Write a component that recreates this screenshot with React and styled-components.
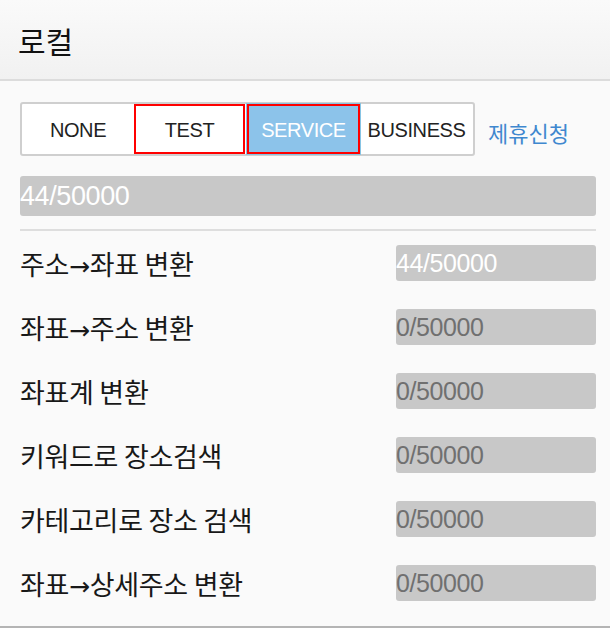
import React from 'react'
import styled, { createGlobalStyle } from 'styled-components'

const Global = createGlobalStyle`
  body {
    margin: 0;
    background: #fafafa;
    font-family: "Liberation Sans", "Noto Sans CJK KR", sans-serif;
  }
`

const Panel = styled.div`
  width: 610px;
  height: 626px;
  background: #fafafa;
  border-bottom: 2px solid #b4b4b4;
  display: flex;
  flex-direction: column;
`

const Header = styled.div`
  height: 79px;
  display: flex;
  align-items: center;
  padding: 0 18px;
  background: linear-gradient(#fafafa, #f1f1f1);
  border-bottom: 2px solid #dcdcdc;
  font-size: 30px;
  color: #111;
`

const Body = styled.div`
  padding: 21px 14px 0 20px;
  display: flex;
  flex-direction: column;
`

const Top = styled.div`
  display: flex;
  align-items: center;
  gap: 13px;
`

const Segments = styled.div`
  display: flex;
  height: 54px;
  box-sizing: border-box;
  border: 2px solid #cfcfcf;
  border-radius: 3px;
  background: #fff;
`

const Segment = styled.div`
  width: ${p => p.$w}px;
  box-sizing: border-box;
  display: flex;
  align-items: center;
  justify-content: center;
  padding-top: 2px;
  font-size: 20px;
  letter-spacing: -0.4px;
  white-space: nowrap;
  color: ${p => (p.$active ? '#fff' : '#222')};
  background: ${p => (p.$active ? '#8cc3ea' : 'transparent')};
  border: 2px solid ${p => (p.$marked ? '#f00' : 'transparent')};
  box-shadow: ${p => (p.$active ? '0 0 0 1px #86c4e4' : 'none')};
  margin: ${p => (p.$active ? '0 0 0 2px' : '0')};
`

const Apply = styled.a`
  font-family: "Noto Sans CJK KR", sans-serif;
  font-size: 22px;
  color: #3f88cf;
  margin-top: 6px;
`

const Bar = styled.div`
  height: ${p => p.$h}px;
  width: ${p => p.$width};
  box-sizing: border-box;
  background: #c8c8c8;
  border-radius: 3px;
  display: flex;
  align-items: center;
  font-size: ${p => p.$size}px;
  letter-spacing: -0.4px;
  color: ${p => (p.$light ? '#fff' : '#707070')};
`

const Total = styled(Bar)`
  margin-top: 20px;
`

const Divider = styled.div`
  height: 2px;
  background: #dedede;
  margin-top: 13px;
`

const Row = styled.div`
  height: 64px;
  display: flex;
  align-items: center;
  justify-content: space-between;
`

const Label = styled.span`
  font-family: "Noto Sans CJK KR", sans-serif;
  font-size: 27px;
  color: #181818;
  letter-spacing: -0.3px;
`

const Arrow = styled.span`
  font-family: "DejaVu Sans", sans-serif;
  font-size: 25px;
`

const segments = [
  { label: 'NONE', w: 112 },
  { label: 'TEST', w: 111, marked: true },
  { label: 'SERVICE', w: 113, marked: true, active: true },
  { label: 'BUSINESS', w: 113 },
]

const rows = [
  { label: '주소→좌표 변환', used: 44 },
  { label: '좌표→주소 변환', used: 0 },
  { label: '좌표계 변환', used: 0 },
  { label: '키워드로 장소검색', used: 0 },
  { label: '카테고리로 장소 검색', used: 0 },
  { label: '좌표→상세주소 변환', used: 0 },
]

function withArrows(text) {
  return text.split('→').flatMap((part, i) =>
    i === 0 ? [part] : [<Arrow key={i}>→</Arrow>, part]
  )
}

export default function App() {
  return (
    <Panel>
      <Global />
      <Header>로컬</Header>
      <Body>
        <Top>
          <Segments>
            {segments.map(s => (
              <Segment key={s.label} $w={s.w} $marked={s.marked} $active={s.active}>
                {s.label}
              </Segment>
            ))}
          </Segments>
          <Apply>제휴신청</Apply>
        </Top>
        <Total $h={40} $width="100%" $size={27} $light>44/50000</Total>
        <Divider />
        {rows.map(r => (
          <Row key={r.label}>
            <Label>{withArrows(r.label)}</Label>
            <Bar $h={36} $width="200px" $size={25} $light={r.used > 0}>
              {r.used}/50000
            </Bar>
          </Row>
        ))}
      </Body>
    </Panel>
  )
}
